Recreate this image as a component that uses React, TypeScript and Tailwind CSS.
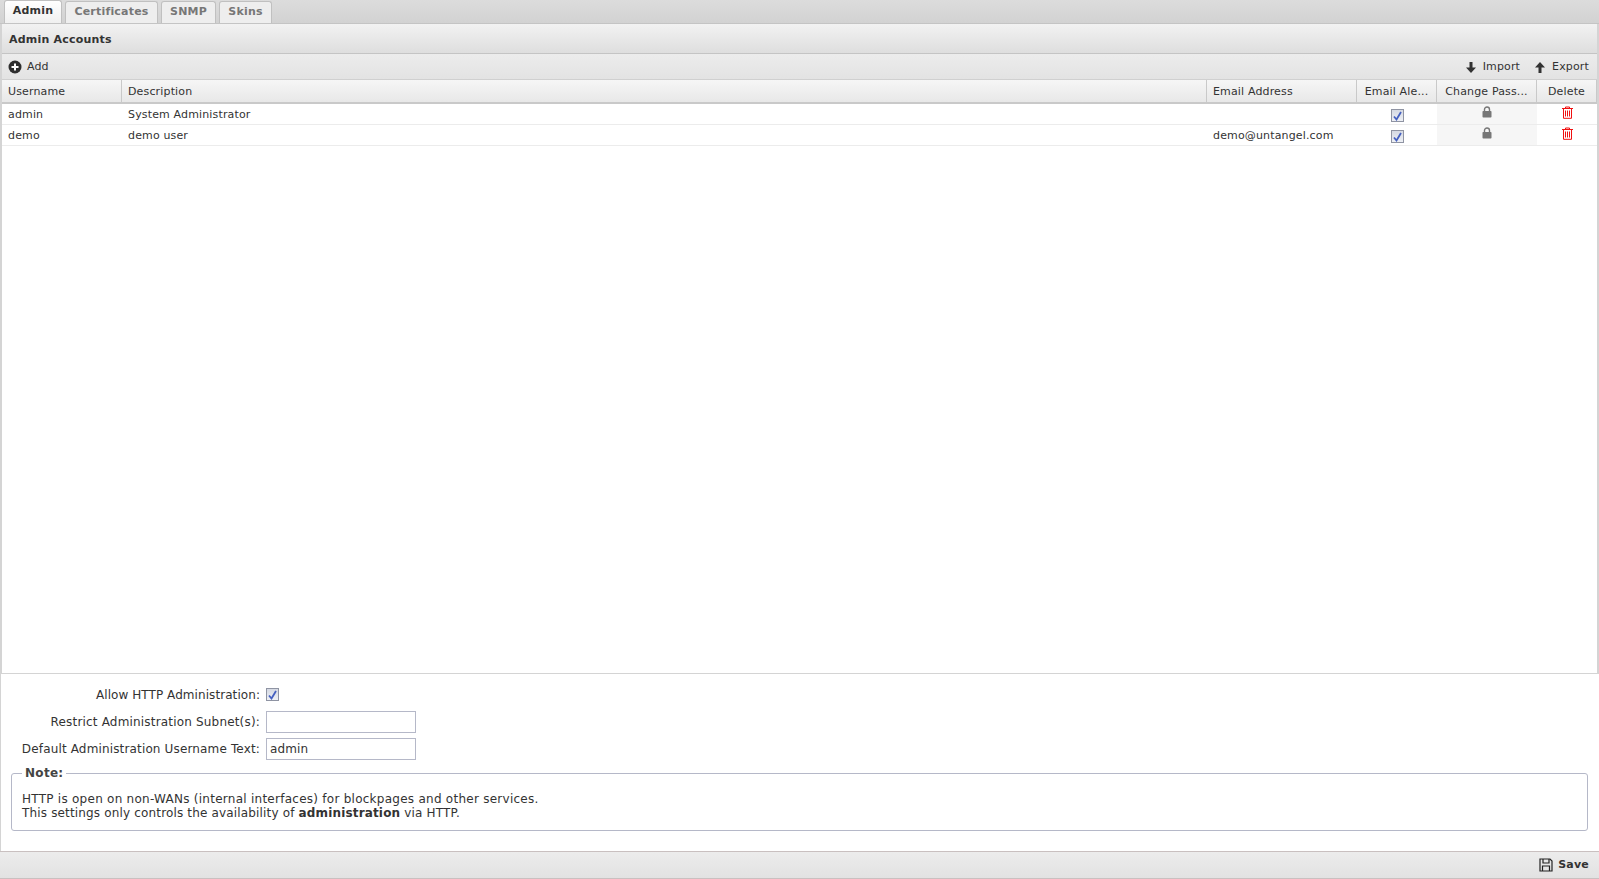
import React from 'react';

const accounts = [
  { username: 'admin', description: 'System Administrator', email: '' },
  { username: 'demo', description: 'demo user', email: 'demo@untangel.com' },
];

const tabs = [
  { name: 'Admin', width: 'w-[58px]' },
  { name: 'Certificates', width: 'w-[93px]' },
  { name: 'SNMP', width: 'w-[55px]' },
  { name: 'Skins', width: 'w-[53px]' },
];

function CheckBox() {
  return (
    <span className="flex h-[13px] w-[13px] items-center justify-center border border-[#8f94a3] bg-gradient-to-b from-[#d5d9e3] to-[#eef0f5]">
      <svg width="9" height="10" viewBox="0 0 9 10">
        <path d="M1 5.5l2.5 3L8 1" fill="none" stroke="#4560c0" strokeWidth="1.8" />
      </svg>
    </span>
  );
}

function LockIcon() {
  return (
    <svg width="10" height="12" viewBox="0 0 10 12">
      <path d="M2.5 5.5V3.5a2.5 2.5 0 0 1 5 0v2" fill="none" stroke="#777" strokeWidth="1.4" />
      <rect x="0.5" y="5" width="9" height="6.5" rx="0.8" fill="#777" />
    </svg>
  );
}

function TrashIcon() {
  return (
    <svg width="11" height="13" viewBox="0 0 11 13" fill="none" stroke="#f01010" strokeWidth="1">
      <path d="M0 2.5h11M3.5 2.5V1h4v1.5" />
      <path d="M1.5 2.5v9.8h8V2.5" />
      <path d="M3.5 4.5v6M5.5 4.5v6M7.5 4.5v6" />
    </svg>
  );
}

function ArrowDownIcon() {
  return (
    <svg width="12" height="11" viewBox="0 0 12 11">
      <path d="M4.5 0h3v5.5H11L6 11 1 5.5h3.5z" fill="#333" />
    </svg>
  );
}

function ArrowUpIcon() {
  return (
    <svg width="12" height="11" viewBox="0 0 12 11">
      <path d="M4.5 11h3V5.5H11L6 0 1 5.5h3.5z" fill="#333" />
    </svg>
  );
}

function HeaderCell({ label, className }: { label: string; className: string }) {
  return (
    <div className={`flex h-full items-center truncate border-r border-[#c9c9c9] pt-[2px] text-[11px] tracking-[0.15px] text-[#333] ${className}`}>
      {label}
    </div>
  );
}

export default function App() {
  return (
    <div className="flex h-[879px] w-full flex-col overflow-hidden bg-white font-['DejaVu_Sans',sans-serif] text-[11px] tracking-[0.15px] text-[#333]">
      {/* Tabs */}
      <div className="flex h-[24px] shrink-0 items-end gap-[3px] border-b border-[#c4c4c4] bg-gradient-to-b from-[#dcdcdc] to-[#d2d2d2] pl-[4px]">
        {tabs.map((tab, i) => (
          <div
            key={tab.name}
            className={
              i === 0
                ? `flex h-[23px] items-center justify-center rounded-t-[3px] border border-b-0 border-[#c0c0c0] bg-gradient-to-b from-white to-[#f0f0f0] pb-[1px] text-[11px] font-bold tracking-[0.2px] text-[#333] ${tab.width}`
                : `flex h-[22px] items-center justify-center rounded-t-[3px] border border-b-0 border-[#c0c0c0] bg-[#eeeeee] pb-[1px] text-[11px] font-bold tracking-[0.2px] text-[#777] ${tab.width}`
            }
          >
            {tab.name}
          </div>
        ))}
      </div>

      {/* Grid panel */}
      <div className="flex h-[649px] shrink-0 flex-col border-x-2 border-[#d4d4d4]">
        <div className="flex h-[30px] shrink-0 items-center border-b border-[#c4c4c4] bg-gradient-to-b from-[#f2f2f2] to-[#dedede] pl-[7px] pt-[3px] text-[11px] font-bold tracking-[0.2px]">
          Admin Accounts
        </div>
        <div className="flex h-[26px] shrink-0 items-center justify-between border-b border-[#d0d0d0] bg-gradient-to-b from-[#ececec] to-[#e3e3e3] pl-[6px] pr-[8px] pt-[1px]">
          <div className="flex items-center gap-[5px]">
            <svg width="14" height="14" viewBox="0 0 14 14">
              <circle cx="7" cy="7" r="6.5" fill="#2e2e2e" />
              <path d="M7 3.5v7M3.5 7h7" stroke="#fff" strokeWidth="2" />
            </svg>
            <span>Add</span>
          </div>
          <div className="flex items-center gap-[14px]">
            <div className="flex items-center gap-[6px]">
              <ArrowDownIcon />
              <span>Import</span>
            </div>
            <div className="flex items-center gap-[6px]">
              <ArrowUpIcon />
              <span>Export</span>
            </div>
          </div>
        </div>
        <div className="flex h-[24px] shrink-0 items-center border-b-2 border-[#c9c9c9] bg-gradient-to-b from-[#f6f6f6] to-[#e8e8e8]">
          <HeaderCell label="Username" className="w-[120px] pl-[6px]" />
          <HeaderCell label="Description" className="w-[1085px] pl-[6px]" />
          <HeaderCell label="Email Address" className="w-[150px] pl-[6px]" />
          <HeaderCell label="Email Ale..." className="w-[80px] justify-center" />
          <HeaderCell label="Change Pass..." className="w-[100px] justify-center" />
          <HeaderCell label="Delete" className="w-[60px] justify-center" />
        </div>
        {accounts.map((account) => (
          <div key={account.username} className="flex h-[21px] shrink-0 items-center border-b border-[#ececec]">
            <div className="w-[120px] pl-[6px] pt-[3px]">{account.username}</div>
            <div className="w-[1085px] pl-[6px] pt-[3px]">{account.description}</div>
            <div className="w-[150px] pl-[6px] pt-[3px]">{account.email}</div>
            <div className="flex w-[80px] justify-center pt-[3px]">
              <CheckBox />
            </div>
            <div className="flex h-full w-[100px] justify-center bg-[#f6f6f6] pt-[2px]">
              <LockIcon />
            </div>
            <div className="flex h-full w-[60px] justify-center pt-[2px]">
              <TrashIcon />
            </div>
          </div>
        ))}
      </div>

      {/* Settings form */}
      <div className="flex min-h-0 flex-1 flex-col border-l border-t border-[#d4d4d4] pl-[10px] pr-[11px]">
        <div className="flex h-[28px] items-center pt-[13px]">
          <label className="w-[254px] pr-[5px] text-right text-[12px] tracking-[0.07px]">Allow HTTP Administration:</label>
          <span className="ml-[1px]"><CheckBox /></span>
        </div>
        <div className="mt-[6px] flex h-[27px] items-center">
          <label className="w-[254px] pr-[5px] text-right text-[12px] tracking-[0.18px]">Restrict Administration Subnet(s):</label>
          <input className="ml-[1px] h-[22px] w-[150px] border border-[#b5b8c8] bg-white px-[3px] text-[12px]" />
        </div>
        <div className="flex h-[27px] items-center">
          <label className="w-[254px] pr-[5px] text-right text-[12px] tracking-[0.15px]">Default Administration Username Text:</label>
          <input
            readOnly
            value="admin"
            className="ml-[1px] h-[22px] w-[150px] border border-[#b5b8c8] bg-white px-[3px] text-[12px] text-[#333]"
          />
        </div>
        <fieldset className="mt-[4px] rounded-[3px] border border-[#b5b8c8] px-[10px] pb-[10px] pt-[12px] text-[12px] leading-[14px]">
          <legend className="px-[3px] font-bold tracking-[0.3px] text-[#444]">Note:</legend>
          <div className="tracking-[0.26px]">HTTP is open on non-WANs (internal interfaces) for blockpages and other services.</div>
          <div className="tracking-[0.16px]">
            This settings only controls the availability of <b>administration</b> via HTTP.
          </div>
        </fieldset>
      </div>

      {/* Footer */}
      <div className="flex h-[28px] shrink-0 items-center justify-end gap-[5px] border-y border-[#c9c0c0] bg-gradient-to-b from-[#ececec] to-[#e2e2e2] pr-[10px]">
        <svg width="14" height="14" viewBox="0 0 14 14" fill="none" stroke="#222" strokeWidth="1.2">
          <path d="M1 1h10l2 2v10H1z" />
          <path d="M4 1v4h6V1M3.5 13V8h7v5" />
        </svg>
        <span className="font-bold tracking-[0.2px]">Save</span>
      </div>
    </div>
  );
}
